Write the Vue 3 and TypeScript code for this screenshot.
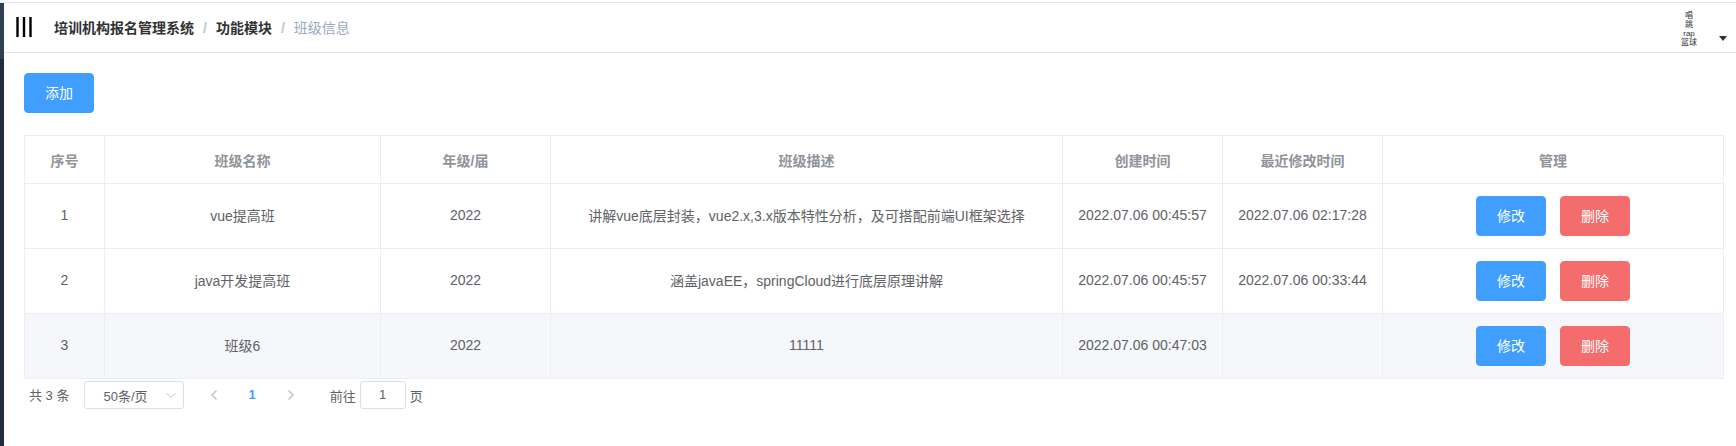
<template>
  <div class="app-wrapper">
    <div class="sidebar"></div>
    <div class="main">
      <div class="navbar">
        <svg class="hamburger" width="16" height="20" viewBox="0 0 16 20">
          <path d="M1.5 0V20M8 0V20M14.5 0V20" stroke="#000" stroke-width="2.4" fill="none" />
        </svg>
        <div class="breadcrumb">
          <span class="crumb">培训机构报名管理系统</span>
          <span class="sep">/</span>
          <span class="crumb">功能模块</span>
          <span class="sep">/</span>
          <span class="crumb current">班级信息</span>
        </div>
        <div class="avatar">
          <div class="hobbies">
            <span>唱</span>
            <span>跳</span>
            <span>rap</span>
            <span>篮球</span>
          </div>
          <i class="caret"></i>
        </div>
      </div>

      <div class="content">
        <button class="btn primary add-btn">添加</button>

        <table class="grid">
          <colgroup>
            <col v-for="(w, i) in colWidths" :key="i" :style="{ width: w + 'px' }" />
          </colgroup>
          <thead>
            <tr>
              <th v-for="h in headers" :key="h">{{ h }}</th>
            </tr>
          </thead>
          <tbody>
            <tr v-for="row in rows" :key="row.id" :class="{ hovered: row.id === 3 }">
              <td>{{ row.id }}</td>
              <td>{{ row.name }}</td>
              <td>{{ row.grade }}</td>
              <td>{{ row.desc }}</td>
              <td>{{ row.created }}</td>
              <td>{{ row.updated }}</td>
              <td class="manage">
                <div class="actions">
                  <button class="btn primary">修改</button>
                  <button class="btn danger">删除</button>
                </div>
              </td>
            </tr>
          </tbody>
        </table>

        <div class="pagination">
          <span class="total">共 3 条</span>
          <div class="size-select">
            <span>50条/页</span>
            <svg width="12" height="12" viewBox="0 0 12 12">
              <path d="M1.5 4L6 8.5L10.5 4" stroke="#c0c4cc" stroke-width="1" fill="none" />
            </svg>
          </div>
          <svg class="arrow prev" width="10" height="12" viewBox="0 0 10 12">
            <path d="M7.5 1.5L3 6L7.5 10.5" stroke="#c0c4cc" stroke-width="1.5" fill="none" />
          </svg>
          <span class="page-num">1</span>
          <svg class="arrow next" width="10" height="12" viewBox="0 0 10 12">
            <path d="M2.5 1.5L7 6L2.5 10.5" stroke="#c0c4cc" stroke-width="1.5" fill="none" />
          </svg>
          <span class="jump">前往</span>
          <div class="jump-input">1</div>
          <span class="jump-unit">页</span>
        </div>
      </div>
    </div>
  </div>
</template>

<script setup lang="ts">
interface ClassRow {
  id: number
  name: string
  grade: string
  desc: string
  created: string
  updated: string
}

const colWidths = [80, 276, 170, 512, 160, 160, 341]

const headers = ['序号', '班级名称', '年级/届', '班级描述', '创建时间', '最近修改时间', '管理']

const rows: ClassRow[] = [
  {
    id: 1,
    name: 'vue提高班',
    grade: '2022',
    desc: '讲解vue底层封装，vue2.x,3.x版本特性分析，及可搭配前端UI框架选择',
    created: '2022.07.06 00:45:57',
    updated: '2022.07.06 02:17:28'
  },
  {
    id: 2,
    name: 'java开发提高班',
    grade: '2022',
    desc: '涵盖javaEE，springCloud进行底层原理讲解',
    created: '2022.07.06 00:45:57',
    updated: '2022.07.06 00:33:44'
  },
  {
    id: 3,
    name: '班级6',
    grade: '2022',
    desc: '11111',
    created: '2022.07.06 00:47:03',
    updated: ''
  }
]
</script>

<style>
html,
body {
  margin: 0;
  background: #fff;
}
</style>

<style scoped>
.app-wrapper {
  display: flex;
  height: 443px;
  margin-top: 2px;
  border-top: 1px solid #e6e6e6;
  overflow: hidden;
  font-family: "Liberation Sans", "Noto Sans CJK SC", sans-serif;
  color: #606266;
}

.sidebar {
  width: 4px;
  flex-shrink: 0;
  background: linear-gradient(#304156 0, #304156 56px, #1f2d3d 56px);
}

.main {
  flex: 1;
  min-width: 0;
}

.navbar {
  display: flex;
  align-items: center;
  height: 49px;
  border-bottom: 1px solid #e6e6e6;
}

.hamburger {
  margin-left: 12px;
  margin-right: 22px;
  margin-top: -1px;
}

.breadcrumb {
  margin-top: -2px;
  font-size: 14px;
  font-weight: 700;
  color: #303133;
}

.crumb {
  color: #303133;
}

.crumb.current {
  font-weight: 400;
  color: #97a8be;
}

.sep {
  margin: 0 9px;
  font-weight: 700;
  color: #c0c4cc;
}

.avatar {
  display: flex;
  align-items: center;
  margin-left: auto;
  margin-right: 9px;
  color: #333;
}

.hobbies {
  display: flex;
  flex-direction: column;
  align-items: center;
  width: 40px;
  margin-top: 2px;
  font-size: 8px;
  line-height: 9px;
}

.caret {
  width: 0;
  height: 0;
  margin: 22px 0 0 10px;
  border-left: 4px solid transparent;
  border-right: 4px solid transparent;
  border-top: 5px solid #303133;
}

.content {
  padding: 20px 13px 20px 20px;
}

.btn {
  height: 40px;
  width: 70px;
  padding: 0 0 2px;
  border: 1px solid #409eff;
  border-radius: 4px;
  background: #409eff;
  color: #fff;
  font-family: inherit;
  font-size: 14px;
}

.btn.danger {
  border-color: #f56c6c;
  background: #f56c6c;
}

.add-btn {
  display: block;
  margin-bottom: 22px;
}

.grid {
  width: 1699px;
  table-layout: fixed;
  border-collapse: collapse;
  font-size: 14px;
}

.grid th,
.grid td {
  border: 1px solid #ebeef5;
  padding: 0 10px;
  text-align: center;
}

.grid th {
  height: 47px;
  font-weight: 700;
  color: #909399;
}

.grid td {
  height: 65px;
  padding-bottom: 2px;
  box-sizing: border-box;
}

.grid td.manage {
  padding-bottom: 0;
}

.grid tr.hovered td {
  background: #f5f7fa;
}

.actions {
  display: flex;
  justify-content: center;
  gap: 14px;
}

.pagination {
  display: flex;
  align-items: center;
  height: 28px;
  margin-top: 2px;
  font-size: 13px;
}

.total {
  margin-left: 5px;
  margin-top: -2px;
}

.size-select {
  display: flex;
  align-items: center;
  justify-content: space-between;
  box-sizing: border-box;
  width: 100px;
  height: 28px;
  margin-left: 15px;
  padding: 0 6px 0 18px;
  border: 1px solid #dcdfe6;
  border-radius: 3px;
}

.arrow.prev {
  margin-left: 25px;
}

.page-num {
  margin-left: 29px;
  margin-top: -2px;
  font-weight: 700;
  color: #409eff;
}

.arrow.next {
  margin-left: 30px;
}

.jump {
  margin-left: 34px;
}

.jump-input {
  box-sizing: border-box;
  width: 46px;
  height: 28px;
  margin-left: 4px;
  border: 1px solid #dcdfe6;
  border-radius: 3px;
  text-align: center;
  line-height: 26px;
}

.jump-unit {
  margin-left: 4px;
}
</style>
